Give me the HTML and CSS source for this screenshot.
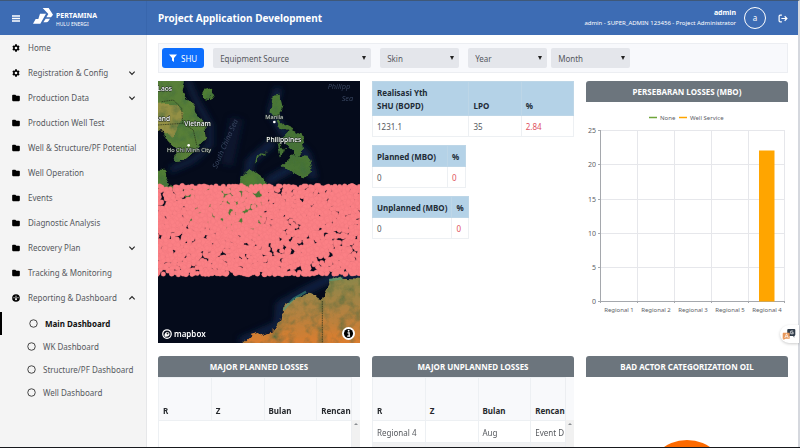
FILE: index.html
```html
<!DOCTYPE html>
<html lang="en">
<head>
<meta charset="utf-8">
<title>Project Application Development</title>
<link rel="stylesheet" href="styles.css">
</head>
<body>
<svg class="defs" aria-hidden="true">
  <symbol id="gear" viewBox="0 0 24 24"><path fill-rule="evenodd" d="M9.500 1h5l.7 3.200 1.900 1.100 3.200-1 2.500 4.300-2.500 2.300v2.200l2.500 2.300-2.500 4.300-3.200-1-1.900 1.100-.7 3.200h-5l-.7-3.200-1.900-1.100-3.200 1-2.500-4.300 2.500-2.300v-2.200L1.200 8.600l2.500-4.300 3.200 1 1.900-1.100zM12 8a4 4 0 1 0 0 8 4 4 0 0 0 0-8z"/></symbol>
  <symbol id="folder" viewBox="0 0 24 24"><path d="M3 2h7l3 3h8a2.500 2.500 0 0 1 2.500 2.500V19a2.500 2.500 0 0 1-2.500 2.500H3A2.500 2.500 0 0 1 .5 19V4.500A2.500 2.500 0 0 1 3 2z"/></symbol>
  <symbol id="gauge" viewBox="0 0 24 24"><circle cx="12" cy="12" r="11.500"/><path d="M12 5v11" stroke="#f4f4f4" stroke-width="2.500"/><circle cx="12" cy="16" r="3" fill="#f4f4f4"/><circle cx="6" cy="11" r="1.700" fill="#f4f4f4"/><circle cx="18" cy="11" r="1.700" fill="#f4f4f4"/></symbol>
  <symbol id="down" viewBox="0 0 12 12"><path d="M2 4l4 4 4-4" fill="none" stroke="#222" stroke-width="1.700"/></symbol>
  <symbol id="up" viewBox="0 0 12 12"><path d="M2 8l4-4 4 4" fill="none" stroke="#222" stroke-width="1.700"/></symbol>
  <symbol id="ring" viewBox="0 0 12 12"><circle cx="6" cy="6" r="5" fill="none" stroke="#333" stroke-width="1.200"/></symbol>
</svg>

<header class="topbar">
  <div class="brand">
    <button class="plain" aria-label="Toggle menu"><svg class="burger" viewBox="0 0 8 7"><path d="M0 1h8M0 3.500h8M0 6h8" stroke="#fff" stroke-width="1.300"/></svg></button>
    <svg class="logo" viewBox="0 0 60 48"><path d="M29 0h18l13 20-6 8H40l6-10z" fill="#fff"/><path d="M21 17h18L22 47H0l8-14h8z" fill="#fff"/><path d="M38 32h13l-5 8q-2 3-6 3h-9z" fill="#fff"/></svg>
    <div class="brand-text"><b>PERTAMINA</b><span>HULU ENERGI</span></div>
  </div>
  <h1>Project Application Development</h1>
  <div class="user"><b>admin</b><span>admin - SUPER_ADMIN 123456 - Project Administrator</span></div>
  <div class="avatar">a</div>
  <button class="plain logout" aria-label="Log out"><svg viewBox="0 0 18 16"><path d="M7 2H4a2 2 0 0 0-2 2v8a2 2 0 0 0 2 2h3M6 8h10M12 4l4 4-4 4" fill="none" stroke="#fff" stroke-width="2.200"/></svg></button>
</header>

<div class="body">
  <nav class="sidebar">
    <ul>
      <li><a href="#"><svg><use href="#gear"/></svg><span>Home</span></a></li>
      <li><a href="#"><svg><use href="#gear"/></svg><span>Registration &amp; Config</span><svg class="chev"><use href="#down"/></svg></a></li>
      <li><a href="#"><svg><use href="#folder"/></svg><span>Production Data</span><svg class="chev"><use href="#down"/></svg></a></li>
      <li><a href="#"><svg><use href="#folder"/></svg><span>Production Well Test</span></a></li>
      <li><a href="#"><svg><use href="#folder"/></svg><span>Well &amp; Structure/PF Potential</span></a></li>
      <li><a href="#"><svg><use href="#folder"/></svg><span>Well Operation</span></a></li>
      <li><a href="#"><svg><use href="#folder"/></svg><span>Events</span></a></li>
      <li><a href="#"><svg><use href="#folder"/></svg><span>Diagnostic Analysis</span></a></li>
      <li><a href="#"><svg><use href="#folder"/></svg><span>Recovery Plan</span><svg class="chev"><use href="#down"/></svg></a></li>
      <li><a href="#"><svg><use href="#folder"/></svg><span>Tracking &amp; Monitoring</span></a></li>
      <li><a href="#"><svg><use href="#gauge"/></svg><span>Reporting &amp; Dashboard</span><svg class="chev"><use href="#up"/></svg></a>
        <ul class="sub">
          <li><a class="active" href="#"><svg><use href="#ring"/></svg><span>Main Dashboard</span></a></li>
          <li><a href="#"><svg><use href="#ring"/></svg><span>WK Dashboard</span></a></li>
          <li><a href="#"><svg><use href="#ring"/></svg><span>Structure/PF Dashboard</span></a></li>
          <li><a href="#"><svg><use href="#ring"/></svg><span>Well Dashboard</span></a></li>
        </ul>
      </li>
    </ul>
  </nav>

  <main>
    <form class="filters">
      <button type="button" class="shu"><svg viewBox="0 0 16 16"><path d="M0 1h16l-6 7v8l-4-3V8z" fill="#fff"/></svg>SHU</button>
      <label class="pick wide"><select aria-label="Equipment Source"><option>Equipment Source</option></select></label>
      <label class="pick"><select aria-label="Skin"><option>Skin</option></select></label>
      <label class="pick"><select aria-label="Year"><option>Year</option></select></label>
      <label class="pick near"><select aria-label="Month"><option>Month</option></select></label>
    </form>

    <div class="grid">
      <section class="map">
        <svg viewBox="24 18 606 786" preserveAspectRatio="xMidYMid slice" role="img" aria-label="Map">
          <defs>
            <filter id="rough" x="-10%" y="-10%" width="120%" height="120%">
              <feTurbulence type="fractalNoise" baseFrequency=".03" numOctaves="4" seed="4" result="n"/>
              <feDisplacementMap in="SourceGraphic" in2="n" scale="26" xChannelSelector="R" yChannelSelector="G" result="d"/>
              <feColorMatrix in="n" values="0 0 0 0 .05  0 0 0 0 .15  0 0 0 0 .05  1.800 0 0 0 -.75" result="s"/>
              <feComposite in="s" in2="d" operator="in" result="t"/>
              <feMerge><feMergeNode in="d"/><feMergeNode in="t"/></feMerge>
            </filter>
            <filter id="soft"><feGaussianBlur stdDeviation="9"/></filter>
            <linearGradient id="desert" x1="0" y1="0" x2="0" y2="1"><stop offset="0" stop-color="#8b8749"/><stop offset=".45" stop-color="#b08242"/><stop offset="1" stop-color="#e57c2a"/></linearGradient>
          </defs>
          <rect x="0" y="0" width="660" height="830" fill="#050b1b"/>
          <g filter="url(#soft)" fill="none" stroke="#14284a">
            <path d="M110 10L140 80 180 150 180 210 130 255 60 285" stroke-width="14"/>
            <path d="M385 40L365 110 400 170 470 240 490 310M370 200L300 260 290 330M440 270L350 320" stroke-width="20"/>
            <path d="M260 130L230 270" stroke-width="40" opacity=".4"/>
            <path d="M270 800L385 750 390 690 470 645 540 610 640 600" stroke-width="20"/>
          </g>
          <g filter="url(#rough)">
            <path d="M0 0H108L98 50 122 85 158 130 168 185 150 218 120 235 98 252 82 256 78 225 56 205 40 165 0 150z" fill="#587f38"/>
            <path d="M0 85L50 80 90 90 98 140 70 195 45 170 0 155z" fill="#949045"/>
            <path d="M160 45L185 38 195 55 180 75 160 72 152 60zM368 65L392 62 400 92 388 122 362 116 364 90z" fill="#4f7d35"/>
            <path d="M0 290L40 290 58 315 70 345 0 345zM100 340H270L275 310 305 282 345 312 350 345 330 500 120 440z" fill="#4f7d35"/>
            <path d="M372 130L400 145 430 160 420 172 385 155zM400 190L425 165 452 178 462 215 445 245 415 220zM395 272L430 240 470 245 484 290 455 318 425 285 400 288zM350 225L310 268 316 250zM385 205L402 225 396 245z" fill="#4a7434"/>
            <path d="M268 815L300 785 375 765 395 735 400 697 430 675 475 653 515 673 542 620 570 608 650 612V830z" fill="url(#desert)"/>
          </g>
          <path d="M400 705L430 672 468 650M537 615L578 610" fill="none" stroke="#46a58b" stroke-width="7" opacity=".5"/>
          <path d="M517 678V804M35 80L70 75 95 100 98 145 130 165 140 210M24 150L98 145" fill="none" stroke="#222c18" stroke-width="2" stroke-dasharray="5 2"/>
          <g id="wells" fill="#fb8085" stroke="#f0787f" stroke-width="1"></g>
          <g class="places">
            <text x="22" y="48">Laos</text><text x="24" y="138">and</text><text x="103" y="154">Vietnam</text>
            <text x="349" y="201">Philippines</text>
          </g>
          <g class="cities"><text x="51" y="230">Ho Chi Minh City</text><text x="346" y="132">Manila</text></g>
          <circle cx="116" cy="211" r="4" fill="#fff"/><circle cx="373" cy="141" r="4" fill="#fff"/>
          <g class="seas"><text x="533" y="42">Philipp</text><text x="575" y="79">Sea</text><text transform="translate(200 282) rotate(-66)">South China Sea</text></g>
        </svg>
        <div class="mapbox"><svg viewBox="0 0 20 20"><circle cx="10" cy="10" r="8.500" fill="none" stroke="#fff" stroke-width="2.500"/><path d="M5 15c-1-6 3-10 7-9 4 2 4 6 1 8-2 1-5 2-8 1z" fill="#fff"/><circle cx="11" cy="9" r="1.800" fill="#222"/></svg>mapbox</div>
        <button class="info" aria-label="Map attribution"><svg viewBox="0 0 20 20"><circle cx="10" cy="10" r="10" fill="#fff"/><circle cx="10" cy="10" r="7"/><path d="M8.500 9H11v5M8 14h4.500" fill="none" stroke="#fff" stroke-width="2"/><circle cx="10.200" cy="5.800" r="1.400" fill="#fff"/></svg></button>
      </section>

      <section class="stats">
        <table class="full"><thead><tr><th>Realisasi Yth<br>SHU (BOPD)</th><th>LPO</th><th>%</th></tr></thead><tbody><tr><td>1231.1</td><td>35</td><td class="red">2.84</td></tr></tbody></table>
        <table class="small"><thead><tr><th>Planned (MBO)</th><th>%</th></tr></thead><tbody><tr><td>0</td><td class="red">0</td></tr></tbody></table>
        <table class="small"><thead><tr><th>Unplanned (MBO)</th><th>%</th></tr></thead><tbody><tr><td>0</td><td class="red">0</td></tr></tbody></table>
      </section>

      <section>
        <h2>PERSEBARAN LOSSES (MBO)</h2>
        <svg class="chart" viewBox="0 0 202 241" role="img" aria-label="Persebaran losses per regional">
          <path d="M63 15.500h8" stroke="#6fa53a" stroke-width="1.500"/><text x="74" y="18">None</text>
          <path d="M93 15.500h8" stroke="#ffa500" stroke-width="1.500"/><text x="104" y="18">Well Service</text>
          <path d="M14.500 28.500h184M14.500 62.500h184M14.500 97.500h184M14.500 131.500h184M14.500 165.500h184M51.500 28v171M88.500 28v171M125.500 28v171M162.500 28v171M198.500 28v171" stroke="#e6e7eb" fill="none"/>
          <path d="M14.500 28v173M12 199.500h187M12 28.500h2M12 62.500h2M12 97.500h2M12 131.500h2M12 165.500h2M51.500 199v2M88.500 199v2M125.500 199v2M162.500 199v2M198.500 199v2" stroke="#a5a8ad" fill="none"/>
          <path d="M173 48.500h15.500v151H173z" fill="#ffa500"/>
          <g class="ticks" text-anchor="end"><text x="10" y="31">25</text><text x="10" y="65">20</text><text x="10" y="100">15</text><text x="10" y="134">10</text><text x="10" y="168">5</text><text x="10" y="202">0</text></g>
          <g text-anchor="middle"><text x="33" y="210">Regional 1</text><text x="70" y="210">Regional 2</text><text x="107" y="210">Regional 3</text><text x="144" y="210">Regional 5</text><text x="181" y="210">Regional 4</text></g>
        </svg>
      </section>

      <section>
        <h2>MAJOR PLANNED LOSSES</h2>
        <div class="scroller">
          <table class="losses"><thead><tr><th>R</th><th>Z</th><th>Bulan</th><th>Rencan</th></tr></thead><tbody><tr class="empty"><td colspan="4"></td></tr></tbody></table>
          <div class="track"><i></i></div>
        </div>
      </section>
      <section>
        <h2>MAJOR UNPLANNED LOSSES</h2>
        <div class="scroller">
          <table class="losses"><thead><tr><th>R</th><th>Z</th><th>Bulan</th><th>Rencan</th></tr></thead><tbody><tr><td>Regional 4</td><td></td><td>Aug</td><td>Event D</td></tr><tr class="alt"><td></td><td></td><td></td><td></td></tr></tbody></table>
          <div class="track"><i></i></div>
        </div>
      </section>
      <section>
        <h2>BAD ACTOR CATEGORIZATION OIL</h2>
        <svg class="chart" viewBox="0 0 202 150" role="img" aria-label="Bad actor categories"><circle cx="101" cy="104" r="41" fill="#fd6a00"/></svg>
      </section>
    </div>
  </main>
</div>
<button class="translate" aria-label="Translate"><svg viewBox="0 0 40 36"><rect x="15" y="2" width="23" height="20" rx="3" fill="#2f3b49"/><path d="M31 21l4 6v-6z" fill="#2f3b49"/><path d="M32 8h-7v8h7v-4h-3" fill="none" stroke="#fff" stroke-width="2"/><path d="M3 13h19v17H10l-6 4v-4H2V16z" fill="#e9995c"/><path d="M8 28l5-12 5 12M10 24h6" fill="none" stroke="#fff" stroke-width="2"/></svg></button>
<script src="map.js"></script>
</body>
</html>
```
FILE: map.js
```js
// Scatter the well markers over the survey band with a repeatable sequence.
const wells = document.getElementById('wells');
let seed = 77;
const next = () => (seed = (seed * 16807) % 2147483647) / 2147483647;
let marks = '';
for (let i = 0; i < 3300; i++) {
  const x = 20 + next() * 614;
  const y = 332 + next() * 267;
  marks += `<circle cx="${x.toFixed(0)}" cy="${y.toFixed(0)}" r="7"/>`;
}
wells.innerHTML = marks;
```
FILE: styles.css
```css
* { box-sizing: border-box; }
body {
  margin: 0;
  height: 100vh;
  display: flex;
  flex-direction: column;
  overflow: hidden;
  border-bottom: 1px solid #17191d;
  background: #fff;
  color: #56595e;
  font: 8px/13px "Noto Sans", "Open Sans", sans-serif;
}
button, select { font: inherit; color: inherit; }
ul { list-style: none; margin: 0; padding: 0; }
a { color: inherit; text-decoration: none; }
svg { display: block; flex: none; }
.defs { position: absolute; width: 0; height: 0; }
.plain { border: 0; padding: 0; background: none; }

.topbar {
  display: flex;
  align-items: center;
  flex: none;
  height: 35px;
  padding-right: 10px;
  border-top: 1px solid #3f5878;
  border-right: 2px solid #d5d8de;
  background: #3d6cb4;
  color: #fff;
}
.brand {
  display: flex;
  align-items: center;
  width: 147px;
  height: 100%;
  padding-left: 12px;
  border-right: 1px solid #3866ad;
}
.burger { width: 8px; height: 7px; }
.logo { width: 20px; height: 16px; margin: 0 3px 5px 13px; }
.brand-text { display: flex; flex-direction: column; line-height: 8px; padding-top: 3px; }
.brand-text b { font-size: 7px; }
.brand-text span { font-size: 5px; }
h1 { flex: 1; margin: 0 0 0 11px; font-size: 10px; line-height: 14px; }
.user { display: flex; flex-direction: column; text-align: right; line-height: 10px; }
.user b { font-size: 7px; }
.user span { font-size: 6px; }
.avatar {
  width: 22px;
  height: 22px;
  margin: 0 12px 0 8px;
  border: 1px solid #fff;
  border-radius: 50%;
  line-height: 20px;
  text-align: center;
}
.logout svg { width: 10px; height: 9px; }

.body { display: flex; flex: 1; min-height: 0; }
.sidebar { flex: none; width: 147px; border-right: 1px solid #e6e7e9; background: #f4f4f4; overflow: hidden; }
.sidebar a { display: flex; align-items: center; height: 25px; padding: 0 10px 0 12px; white-space: nowrap; }
.sidebar svg { width: 8px; height: 8px; margin-right: 8px; fill: #000; }
.sidebar .chev { margin: 0 0 0 auto; }
.sidebar .sub { padding-top: 2px; }
.sidebar .sub a { height: 23px; padding-left: 27px; border-left: 0 solid #000; }
.sidebar .sub svg { width: 9px; height: 9px; margin-right: 7px; }
.sidebar .sub .active { border-left-width: 2px; color: #111; font-weight: 700; }

main { flex: 1; min-width: 0; overflow: hidden; padding: 8px 10px 0 11px; border-right: 2px solid #d5d8de; }
.filters {
  display: flex;
  align-items: center;
  height: 30px;
  margin-bottom: 8px;
  padding: 0 3px;
  border: 1px solid #eceef2;
  background: #f8f9fc;
}
.shu {
  display: flex;
  align-items: center;
  gap: 4px;
  height: 20px;
  padding: 0 7px;
  border: 0;
  border-radius: 3px;
  background: #0d6efd;
  color: #fff;
}
.shu svg { width: 8px; height: 8px; }
.pick { position: relative; width: 79px; height: 20px; margin-left: 9px; }
.pick.wide { width: 158px; }
.pick.near { margin-left: 4px; }
.pick select { appearance: none; width: 100%; height: 100%; padding: 0 7px; border: 0; border-radius: 2px; background: #e4e6eb; }
.pick::after {
  content: "";
  position: absolute;
  top: 8px;
  right: 5px;
  border: 2px solid transparent;
  border-top: 4px solid #222;
  border-bottom: 0;
}

.grid { display: grid; grid-template-columns: repeat(3, minmax(0, 1fr)); gap: 13px 12px; align-items: start; }
h2 {
  margin: 0;
  border-radius: 3px 3px 0 0;
  background: #6c757d;
  color: #fff;
  font-size: 8px;
  line-height: 21px;
  text-align: center;
}
.map { position: relative; }
.map > svg { width: 100%; }
.places { fill: #fff; font-size: 20px; font-weight: 500; stroke: #1b2620; stroke-width: 3px; paint-order: stroke; }
.cities { fill: #d8dcda; font-size: 17px; stroke: #1b2620; stroke-width: 3px; paint-order: stroke; }
.seas { fill: #38455f; font-size: 22px; font-style: italic; }
.mapbox { position: absolute; left: 4px; bottom: 3px; display: flex; align-items: center; gap: 2px; color: #fff; font-weight: 600; }
.mapbox svg { width: 10px; height: 10px; }
.info { position: absolute; right: 5px; bottom: 3px; padding: 0; border: 0; border-radius: 50%; background: none; }
.info svg { width: 13px; height: 13px; }

table { border-collapse: collapse; }
th, td { padding: 4px 4px 3px; border: 1px solid #edf0f3; text-align: left; vertical-align: bottom; white-space: nowrap; }
.stats { display: flex; flex-direction: column; align-items: flex-start; gap: 8px; }
.stats th { border-color: #bdd6e7; background: #b4d2e7; color: #212b36; }
.stats .red { color: #e05260; }
.stats .full { width: 100%; }
.full th:nth-child(1) { width: 48%; }
.full th:nth-child(2) { width: 26%; }
.small { min-width: 94px; }

.chart { width: 100%; }
.chart text { fill: #5d6066; font-size: 6px; }
.chart .ticks text { font-size: 7px; }

.scroller { position: relative; overflow: hidden; }
.losses { table-layout: fixed; width: 212px; }
.losses th { height: 43px; background: #f8f9fb; color: #25282c; }
.losses td { height: 22px; }
.losses th, .losses td { overflow: hidden; }
.losses .empty td { height: 32px; }
.losses .alt { background: #f1f1f2; }
.track { position: absolute; top: 0; right: 0; bottom: 0; width: 9px; padding-top: 46px; border-left: 1px solid #eceef1; background: linear-gradient(#f8f9fb 43px, #f1f1f1 43px); }
.track i { display: block; width: 4px; margin-left: 2px; border: 2px solid transparent; border-top: 0; border-bottom: 2px solid #8a8d91; }

.translate {
  position: absolute;
  top: 325px;
  right: 1px;
  width: 19px;
  height: 18px;
  padding: 0 2px;
  border: 0;
  border-radius: 9px 0 0 9px;
  background: #fff;
  box-shadow: 0 1px 3px #0003;
}
.translate svg { width: 14px; height: 13px; }
```
